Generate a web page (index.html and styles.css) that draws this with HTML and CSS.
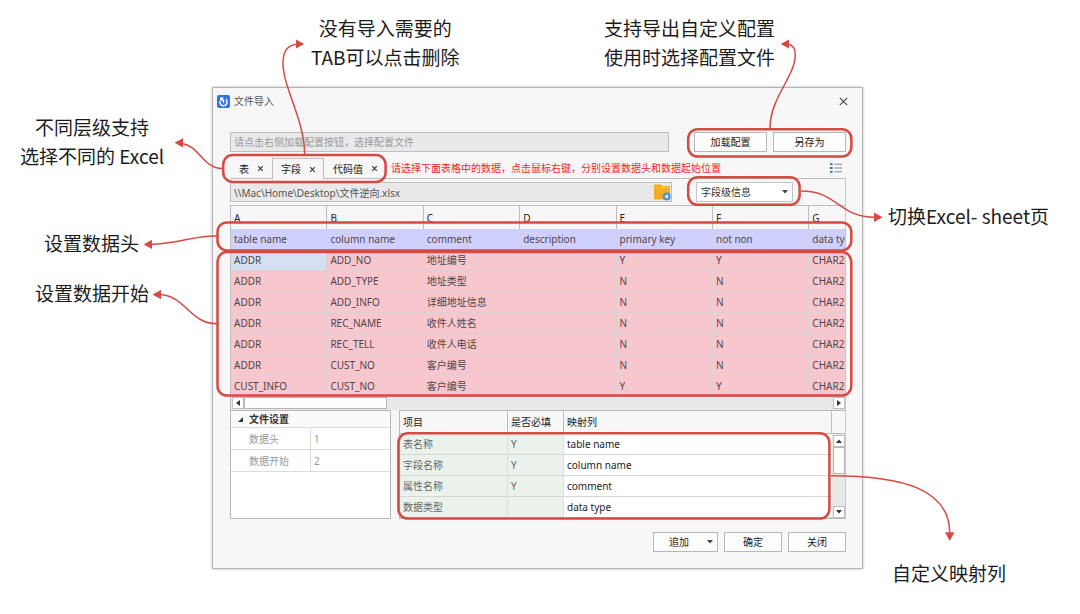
FILE: index.html
```html
<!DOCTYPE html>
<html lang="zh-CN">
<head>
<meta charset="utf-8">
<meta name="viewport" content="width=device-width, initial-scale=1">
<title>文件导入</title>
<link rel="stylesheet" href="styles.css">
</head>
<body>
<main class="board">
  <section class="dialog" aria-labelledby="dialog-title">
    <header class="titlebar">
      <svg class="logo" viewBox="0 0 13 13" aria-hidden="true">
        <rect width="13" height="13" rx="2" fill="#2f74e8"/>
        <path d="M2.8 6C2.6 9.4 4.6 10.9 6.8 10.7C9.8 10.4 11 7.2 9.2 4.2" fill="none" stroke="#fff" stroke-width="1.5"/>
        <path d="M2.8 2.4L6.8 2.6L5.9 3.8C7.6 5.2 7.9 7.4 6.2 8.6C6.2 6.8 5.6 5.8 4.7 5.2L3.7 6.2Z" fill="#fff"/>
      </svg>
      <h1 class="title" id="dialog-title">文件导入</h1>
      <button class="icon-button close" type="button" aria-label="关闭窗口">
        <svg viewBox="0 0 9 9" width="9" height="9" aria-hidden="true"><path d="M.8.8L8.2 8.2M8.2.8L.8 8.2" stroke="#444" stroke-width="1.1"/></svg>
      </button>
    </header>

    <div class="content">
      <div class="config-row">
        <input class="field grow" type="text" aria-label="配置文件" placeholder="请点击右侧加载配置按钮，选择配置文件">
        <div class="config-actions">
          <button class="button wide" type="button">加载配置</button>
          <button class="button wide" type="button">另存为</button>
        </div>
      </div>

      <div class="tab-row">
        <div class="tab">
          <button class="tab-label" type="button">表</button>
          <button class="icon-button" type="button" aria-label="删除表"><svg viewBox="0 0 7 7" width="7" height="7" aria-hidden="true"><path d="M1.2 1.2L5.8 5.8M5.8 1.2L1.2 5.8" stroke="#333" stroke-width="1.1"/></svg></button>
        </div>
        <div class="tab active">
          <button class="tab-label" type="button">字段</button>
          <button class="icon-button" type="button" aria-label="删除字段"><svg viewBox="0 0 7 7" width="7" height="7" aria-hidden="true"><path d="M1.2 1.2L5.8 5.8M5.8 1.2L1.2 5.8" stroke="#333" stroke-width="1.1"/></svg></button>
        </div>
        <div class="tab">
          <button class="tab-label" type="button">代码值</button>
          <button class="icon-button" type="button" aria-label="删除代码值"><svg viewBox="0 0 7 7" width="7" height="7" aria-hidden="true"><path d="M1.2 1.2L5.8 5.8M5.8 1.2L1.2 5.8" stroke="#333" stroke-width="1.1"/></svg></button>
        </div>
        <p class="hint">请选择下面表格中的数据，点击鼠标右键，分别设置数据头和数据起始位置</p>
        <button class="icon-button list" type="button" aria-label="列表">
          <svg viewBox="0 0 12 10" width="12" height="10" aria-hidden="true"><path d="M0 1.2h2.6M0 5h2.6M0 8.8h2.6" stroke="#356c9e" stroke-width="1.8"/><path d="M4.5 1.2H12M4.5 5H12M4.5 8.8H12" stroke="#777" stroke-width=".9"/></svg>
        </button>
      </div>

      <div class="panel">
        <div class="path-row">
          <div class="path-box">
            <input class="field path" type="text" aria-label="文件路径" value="\\Mac\Home\Desktop\文件逆向.xlsx">
            <button class="icon-button folder" type="button" aria-label="选择文件">
              <svg viewBox="0 0 18 17" width="18" height="17" aria-hidden="true"><path d="M0 1.5Q0 .5 1 .5H7L8.5 2H15Q16 2 16 3V15.5H0Z" fill="#f2ad27"/><path d="M1 3.6H15.5" stroke="#f9cf77" stroke-width=".8"/><circle cx="12.7" cy="12.5" r="4" fill="#4c92dc"/><circle cx="12.7" cy="12.5" r="1.7" fill="#dcebfa"/></svg>
            </button>
          </div>
          <div class="select-box">
            <select class="select" aria-label="工作表"><option>字段级信息</option></select>
            <svg class="select-arrow" viewBox="0 0 6 4" width="6" height="4" aria-hidden="true"><path d="M0 0H6L3 3.6Z" fill="#444"/></svg>
          </div>
        </div>

        <table class="sheet">
          <thead>
            <tr><th>A</th><th>B</th><th>C</th><th>D</th><th>E</th><th>F</th><th>G</th></tr>
          </thead>
          <tbody>
            <tr class="data-head"><td>table name</td><td>column name</td><td>comment</td><td>description</td><td>primary key</td><td>not non</td><td>data ty</td></tr>
            <tr><td class="current">ADDR</td><td>ADD_NO</td><td>地址编号</td><td></td><td>Y</td><td>Y</td><td>CHAR2</td></tr>
            <tr><td>ADDR</td><td>ADD_TYPE</td><td>地址类型</td><td></td><td>N</td><td>N</td><td>CHAR2</td></tr>
            <tr><td>ADDR</td><td>ADD_INFO</td><td>详细地址信息</td><td></td><td>N</td><td>N</td><td>CHAR2</td></tr>
            <tr><td>ADDR</td><td>REC_NAME</td><td>收件人姓名</td><td></td><td>N</td><td>N</td><td>CHAR2</td></tr>
            <tr><td>ADDR</td><td>REC_TELL</td><td>收件人电话</td><td></td><td>N</td><td>N</td><td>CHAR2</td></tr>
            <tr><td>ADDR</td><td>CUST_NO</td><td>客户编号</td><td></td><td>N</td><td>N</td><td>CHAR2</td></tr>
            <tr><td>CUST_INFO</td><td>CUST_NO</td><td>客户编号</td><td></td><td>Y</td><td>Y</td><td>CHAR2</td></tr>
          </tbody>
        </table>

        <div class="scroll horizontal">
          <button class="scroll-button" type="button" aria-label="向左滚动"><svg viewBox="0 0 4 6" width="4" height="6" aria-hidden="true"><path d="M4 0V6L0 3Z" fill="#333"/></svg></button>
          <span class="thumb"></span>
          <button class="scroll-button end" type="button" aria-label="向右滚动"><svg viewBox="0 0 4 6" width="4" height="6" aria-hidden="true"><path d="M0 0V6L4 3Z" fill="#333"/></svg></button>
        </div>

        <div class="lower">
          <section class="settings">
            <h2 class="settings-title"><svg viewBox="0 0 5 5" width="5" height="5" aria-hidden="true"><path d="M5 0V5H0Z" fill="#333"/></svg>文件设置</h2>
            <table class="settings-table">
              <tbody>
                <tr><th scope="row">数据头</th><td>1</td></tr>
                <tr><th scope="row">数据开始</th><td>2</td></tr>
              </tbody>
            </table>
          </section>

          <section class="mapping">
            <table class="mapping-table">
              <thead><tr><th class="col-item">项目</th><th class="col-required">是否必填</th><th>映射列</th></tr></thead>
              <tbody>
                <tr><td class="fixed">表名称</td><td class="fixed">Y</td><td>table name</td></tr>
                <tr><td class="fixed">字段名称</td><td class="fixed">Y</td><td>column name</td></tr>
                <tr><td class="fixed">属性名称</td><td class="fixed">Y</td><td>comment</td></tr>
                <tr><td class="fixed">数据类型</td><td class="fixed"></td><td>data type</td></tr>
              </tbody>
            </table>
            <div class="mapping-side">
              <div class="mapping-corner"></div>
              <div class="scroll vertical">
                <button class="scroll-button" type="button" aria-label="向上滚动"><svg viewBox="0 0 6 4" width="6" height="4" aria-hidden="true"><path d="M0 4H6L3 .5Z" fill="#333"/></svg></button>
                <span class="thumb"></span>
                <button class="scroll-button end" type="button" aria-label="向下滚动"><svg viewBox="0 0 6 4" width="6" height="4" aria-hidden="true"><path d="M0 0H6L3 3.5Z" fill="#333"/></svg></button>
              </div>
            </div>
          </section>
        </div>
      </div>

      <footer class="footer">
        <button class="button append" type="button"><span>追加</span><svg viewBox="0 0 6 4" width="6" height="4" aria-hidden="true"><path d="M0 0H6L3 3.6Z" fill="#444"/></svg></button>
        <button class="button" type="button">确定</button>
        <button class="button" type="button">关闭</button>
      </footer>
    </div>
  </section>

  <svg class="marks" viewBox="0 0 1080 614" width="1080" height="614" aria-hidden="true">
    <g fill="none" stroke="#d54a43" stroke-width="2.5">
      <rect x="223.2" y="155" width="162.4" height="27" rx="9.5"/>
      <rect x="688.2" y="129.2" width="163.2" height="27.4" rx="9.5"/>
      <rect x="688.2" y="177.2" width="111.4" height="27.6" rx="9.5"/>
      <rect x="217.5" y="222.4" width="633.8" height="28" rx="9.5"/>
      <rect x="217.5" y="252" width="633.8" height="143.6" rx="9.5"/>
      <rect x="398.4" y="433.2" width="431" height="85.4" rx="9.5"/>
    </g>
    <g fill="none" stroke="#d54a43" stroke-width="1.5">
      <path d="M304.7 154C304 118 283 88 283 63C283 50 288 45 298 44"/>
      <path d="M770 128C770 98 795.3 76 795.3 55C795.3 48 792 44.5 787 44"/>
      <path d="M222 168.5C203 168 199 146 182 143.4"/>
      <path d="M217 236C195 235 178 244 151 244.3"/>
      <path d="M217 323.7C190 324 186 296 160 294.6"/>
      <path d="M801 191C838 191 838 217 875 217.3"/>
      <path d="M831 475.8C905 476 949.7 490 949.7 533"/>
    </g>
    <g fill="#d54a43">
      <path d="M296 39.4L304.3 44L296 48.6Z"/>
      <path d="M789 39.4L780.7 44L789 48.6Z"/>
      <path d="M183 138.2L174.5 142.7L183 147.5Z"/>
      <path d="M152 239.8L143.7 244.4L152 249Z"/>
      <path d="M161 290L152.5 294.6L161 299.2Z"/>
      <path d="M874 212.6L882.5 217.3L874 222Z"/>
      <path d="M945 532.3H954.5L949.7 541Z"/>
    </g>
  </svg>

  <p class="note note-delete">没有导入需要的<br>TAB可以点击删除</p>
  <p class="note note-config">支持导出自定义配置<br>使用时选择配置文件</p>
  <p class="note note-level">不同层级支持<br>选择不同的 Excel</p>
  <p class="note note-head">设置数据头</p>
  <p class="note note-start">设置数据开始</p>
  <p class="note note-sheet">切换Excel- sheet页</p>
  <p class="note note-mapping">自定义映射列</p>
</main>
</body>
</html>
```
FILE: styles.css
```css
* {
  box-sizing: border-box;
}

body {
  margin: 0;
  background: #fff;
  color: #333;
  font: 10px/16px "Noto Sans", "Noto Sans CJK SC", sans-serif;
}

h1, h2, p {
  margin: 0;
  font-size: inherit;
  font-weight: 400;
}

button, input, select {
  margin: 0;
  font: inherit;
  color: inherit;
}

.board {
  position: relative;
  min-width: 1080px;
  min-height: 614px;
  padding: 87px 217px 45px 212px;
}

.dialog {
  border: 1px solid #b4b4b4;
  background: #f7f7f7;
  box-shadow: 0 0 3px rgba(0, 0, 0, 0.25);
}

.titlebar {
  display: flex;
  align-items: center;
  gap: 4px;
  height: 26px;
  padding: 0 14px 0 4px;
}

.logo {
  width: 13px;
  height: 13px;
}

.title {
  color: #555;
}

.icon-button {
  display: flex;
  flex: none;
  padding: 0;
  border: 0;
  background: none;
}

.close,
.list {
  margin-left: auto;
}

.content {
  padding: 18px 16px 16px 17px;
}

.config-row {
  display: flex;
  gap: 25px;
}

.config-actions {
  display: flex;
  gap: 6px;
}

.grow {
  flex: 1;
}

.field {
  min-width: 0;
  height: 20px;
  padding: 0 3px;
  border: 1px solid #bfbfbf;
  border-radius: 0;
  background: #e9e9e9;
  color: #555;
}

.field::placeholder {
  color: #999;
  opacity: 1;
}

.button {
  width: 58px;
  height: 20px;
  padding: 0;
  border: 1px solid #b8b8b8;
  background: #fdfdfd;
  color: #222;
  line-height: 16px;
}

.button.wide {
  width: 73px;
}

.tab-row {
  display: flex;
  align-items: flex-start;
  height: 20px;
  margin-top: 6px;
}

.tab {
  display: flex;
  align-items: center;
  gap: 8px;
  height: 21px;
  padding: 0 8px 0 9px;
}

.tab.active {
  position: relative;
  padding: 0 7px 0 8px;
  border: 1px solid #bdbdbd;
  border-bottom: 0;
  background: #f7f7f7;
}

.tab-label {
  padding: 0;
  border: 0;
  background: none;
  color: #222;
}

.hint {
  margin-left: 5px;
  line-height: 20px;
  color: #f22;
}

.list {
  margin: 5px 4px 0 auto;
}

.panel {
  padding-top: 3px;
  border-top: 1px solid #bdbdbd;
  border-right: 1px solid #c8c8c8;
}

.path-row {
  display: flex;
  gap: 24px;
  padding: 0 52px 3px 0;
}

.path-box {
  position: relative;
  display: flex;
  flex: 1;
}

.path {
  flex: 1;
  padding-right: 24px;
}

.folder {
  position: absolute;
  top: 2px;
  right: 0;
}

.select-box {
  position: relative;
  display: flex;
}

.select {
  width: 97px;
  height: 20px;
  padding: 0 4px;
  border: 1px solid #c4c4c4;
  border-radius: 0;
  background: #fff;
  appearance: none;
}

.select-arrow {
  position: absolute;
  top: 8px;
  right: 5px;
}

table {
  width: 100%;
  border-spacing: 0;
  table-layout: fixed;
}

th, td {
  padding: 0 3px;
  font-weight: 400;
  text-align: left;
  white-space: nowrap;
  overflow: hidden;
}

.sheet {
  border-left: 1px solid #bdbdbd;
  border-top: 1px solid #bdbdbd;
}

.sheet th {
  width: 15.7%;
  height: 23px;
  border-right: 1px solid #bdbdbd;
  color: #222;
}

.sheet th:last-child {
  width: auto;
  border-right: 0;
}

.sheet td {
  height: 21px;
  border-right: 1px solid #dcd2d5;
  border-bottom: 1px solid #dcd2d5;
  background: #f8c6cd;
  color: #504649;
}

.sheet th:last-child,
.sheet td:last-child {
  padding-right: 0;
}

.sheet td:last-child {
  border-right: 0;
}

.sheet .data-head td {
  border-color: #cfcff8;
  background: #d0d0ff;
}

.sheet .current {
  background: #d4dff1;
}

.scroll {
  display: flex;
  background: #e9e9e9;
}

.scroll-button {
  display: flex;
  flex: none;
  align-items: center;
  justify-content: center;
  width: 12px;
  height: 12px;
  padding: 0;
  border: 1px solid #c0c0c0;
  background: #fff;
}

.scroll .thumb {
  border: 1px solid #b4b4b4;
  background: #fdfdfd;
}

.horizontal {
  padding: 0 0 1px 1px;
  border-left: 1px solid #bdbdbd;
}

.horizontal .thumb {
  width: 143px;
}

.horizontal .end {
  margin-left: auto;
}

.lower {
  display: flex;
  gap: 8px;
}

.settings {
  width: 161px;
  border: 1px solid #b8b8b8;
  background: #fff;
}

.settings-title {
  display: flex;
  align-items: center;
  gap: 6px;
  height: 17px;
  padding-left: 7px;
  border-bottom: 1px solid #dcdcdc;
  background: #fafafa;
  font-weight: 700;
}

.settings-table th,
.settings-table td {
  height: 22px;
  border-bottom: 1px solid #dcdcdc;
  color: #999;
}

.settings-table th {
  width: 80px;
  padding-left: 18px;
  border-right: 1px solid #dcdcdc;
}

.mapping {
  display: flex;
  flex: 1;
  border: 1px solid #b8b8b8;
  border-right: 0;
}

.mapping-table {
  flex: 1;
  width: auto;
}

.mapping-table th {
  height: 23px;
  border-right: 1px solid #bdbdbd;
  border-bottom: 1px solid #bdbdbd;
  color: #222;
}

.mapping-table .col-item {
  width: 108px;
}

.mapping-table .col-required {
  width: 56px;
}

.mapping-table td {
  height: 21px;
  border-bottom: 1px solid #d6d6d6;
  background: #fff;
  color: #222;
}

.mapping-table .fixed {
  border-right: 1px solid #dadfdb;
  background: #ebf2eb;
  color: #666;
}

.mapping-side {
  display: flex;
  flex-direction: column;
  width: 13px;
}

.mapping-corner {
  height: 23px;
  border-bottom: 1px solid #bdbdbd;
}

.vertical {
  flex: 1;
  flex-direction: column;
  padding: 1px 0 0 1px;
}

.vertical .thumb {
  height: 27px;
}

.vertical .end {
  margin-top: auto;
}

.footer {
  display: flex;
  justify-content: flex-end;
  gap: 6px;
  margin-top: 13px;
}

.append {
  display: flex;
  align-items: center;
  justify-content: space-between;
  width: 65px;
  padding: 0 4px 0 15px;
}

.marks {
  position: absolute;
  top: 0;
  left: 0;
  pointer-events: none;
}

.note {
  position: absolute;
  font: 19px/29px "Noto Sans CJK SC", sans-serif;
  color: #1c1c1c;
  text-align: center;
  white-space: nowrap;
}

.note-delete {
  top: 13px;
  left: 311px;
}

.note-config {
  top: 13px;
  left: 604px;
}

.note-level {
  top: 112px;
  left: 20px;
}

.note-head {
  top: 228px;
  left: 44px;
}

.note-start {
  top: 278px;
  left: 35px;
}

.note-sheet {
  top: 201px;
  left: 888px;
}

.note-mapping {
  top: 558px;
  left: 892px;
}
```
